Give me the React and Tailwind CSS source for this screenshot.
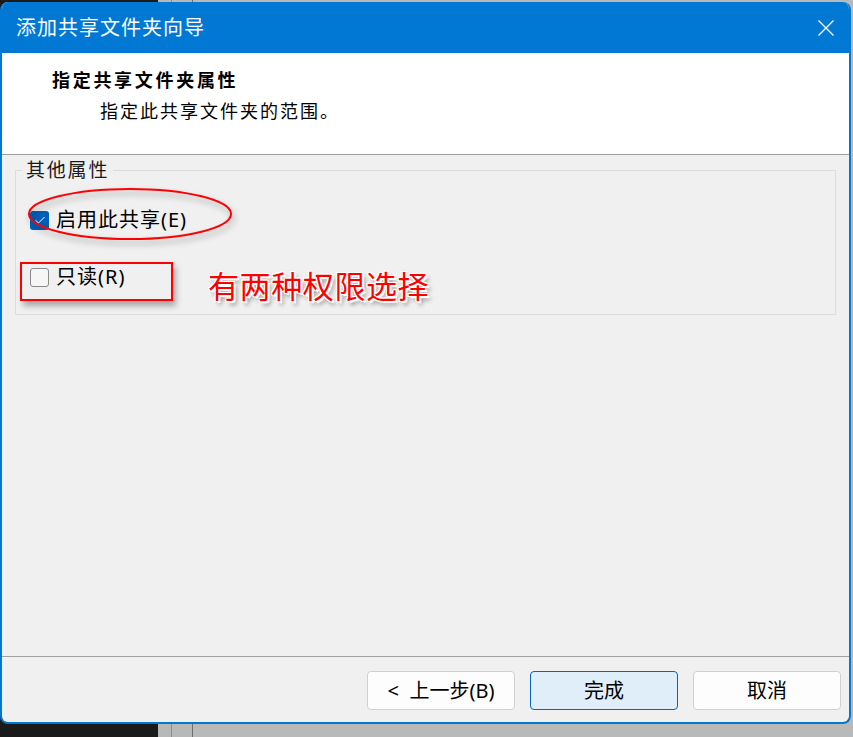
import { useState } from "react";

const font = "font-['Noto_Sans','Noto_Sans_CJK_SC',sans-serif]";

const CheckRow = ({ checked, onToggle, label }) => (
  <label className="flex items-center h-[28px] gap-[7px] cursor-default select-none">
    <span
      onClick={onToggle}
      className={
        checked
          ? "w-[19px] h-[19px] rounded-[3px] bg-[#005fb8] flex items-center justify-center"
          : "w-[19px] h-[19px] rounded-[3px] border border-[#8a8a8a] bg-[#f6f6f6]"
      }
    >
      {checked && (
        <svg width="12" height="10" viewBox="0 0 12 10">
          <path d="M1.5 5.2 L4.5 8 L10.5 2" fill="none" stroke="#fff" strokeWidth="1" />
        </svg>
      )}
    </span>
    <span className="text-[20px] tracking-[1px] text-black leading-none">{label}</span>
  </label>
);

const Button = ({ children, primary }) => (
  <button
    className={
      primary
        ? "w-[148px] h-[39px] rounded-[4px] border border-[#0067c0] bg-[#e0eef9] text-[20px] text-black"
        : "w-[148px] h-[39px] rounded-[4px] border border-[#d0d0d0] bg-[#fdfdfd] text-[20px] text-black"
    }
  >
    {children}
  </button>
);

export default function App() {
  const [enabled, setEnabled] = useState(true);
  const [readOnly, setReadOnly] = useState(false);

  return (
    <div className={`relative w-[853px] h-[737px] overflow-hidden bg-[#b4b4b4] ${font}`}>
      {/* desktop behind the dialog */}
      <div className="flex h-full">
        <div className="w-[158px] bg-[#1a1a1a]" />
        <div className="w-[14px] bg-[#b8b8b8] border-r border-[#8c8c8c]" />
        <div className="w-[21px] bg-[#b8b8b8] border-r border-[#6e6e6e]" />
        <div className="flex-1 bg-[#b9b9b9]" />
      </div>

      {/* wizard window */}
      <div className="absolute left-0 top-[2px] w-[851px] h-[722px] rounded-[8px] overflow-hidden border-x-2 border-b-2 border-[#0078d4] flex flex-col bg-[#f0f0f0]">
        <div className="h-[51px] shrink-0 bg-[#0078d4] flex items-center justify-between pl-[14px] pr-[14px]">
          <span className="text-white text-[20px] tracking-[1px]">添加共享文件夹向导</span>
          <svg width="18" height="18" viewBox="0 0 18 18">
            <path d="M1.5 1.5 L16.5 16.5 M16.5 1.5 L1.5 16.5" stroke="#fff" strokeWidth="1.3" />
          </svg>
        </div>

        <div className="h-[102px] shrink-0 bg-white border-b border-[#a0a0a0] pt-[15px]">
          <div className="pl-[50px] text-[18px] font-bold tracking-[2.7px] leading-[24px] text-black">
            指定共享文件夹属性
          </div>
          <div className="pl-[98px] mt-[7px] text-[18px] tracking-[2px] leading-[24px] text-black">
            指定此共享文件夹的范围。
          </div>
        </div>

        <div className="flex-1 px-[13px] pt-[3px]">
          <fieldset className="border border-[#dcdcdc] pb-[23px]">
            <legend className="ml-[6px] px-[4px] text-[19px] tracking-[1.8px] leading-[24px] text-[#1a1a1a]">其他属性</legend>
            <div className="pl-[14px]">
              <div className="mt-[24px]">
                <CheckRow checked={enabled} onToggle={() => setEnabled(!enabled)} label="启用此共享(E)" />
              </div>
              <div className="mt-[29px]">
                <CheckRow checked={readOnly} onToggle={() => setReadOnly(!readOnly)} label="只读(R)" />
              </div>
            </div>
          </fieldset>
        </div>

        <div className="h-[66px] shrink-0 border-t border-[#a0a0a0] flex justify-end items-start gap-[15px] pt-[14px] pr-[8px]">
          <Button>&lt;&nbsp; 上一步(B)</Button>
          <Button primary>完成</Button>
          <Button>取消</Button>
        </div>

        {/* red annotation marks */}
        <svg
          className="absolute left-[25px] top-[184px] drop-shadow-[2px_4px_3px_rgba(0,0,0,0.35)]"
          width="210"
          height="56"
          viewBox="0 0 210 56"
        >
          <ellipse cx="103" cy="28" rx="101" ry="25" fill="none" stroke="#ff0000" strokeWidth="2" />
        </svg>
        <div className="absolute left-[18px] top-[260px] w-[153px] h-[39px] border-2 border-[#ff0000] shadow-[3px_5px_6px_rgba(0,0,0,0.3)]" />
        <div className="absolute left-[206px] top-[264px] text-[31px] tracking-[0.6px] leading-[40px] text-[#ff0000] [text-shadow:1px_0_0_#fff,-1px_0_0_#fff,0_1px_0_#fff,0_-1px_0_#fff,1px_1px_0_#fff,-1px_-1px_0_#fff,1px_-1px_0_#fff,-1px_1px_0_#fff,2px_2px_0_#fff,3px_4px_4px_rgba(0,0,0,0.45)]">
          有两种权限选择
        </div>
      </div>
    </div>
  );
}
